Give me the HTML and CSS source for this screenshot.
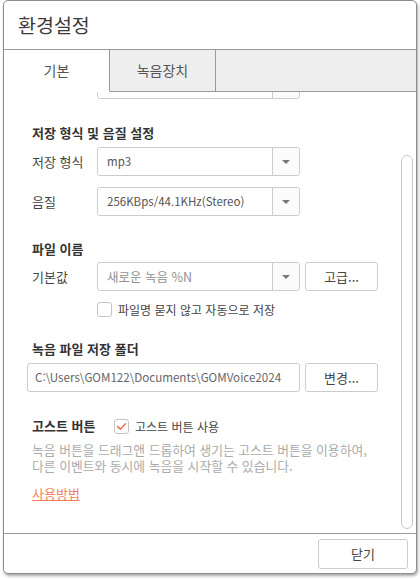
FILE: index.html
```html
<!DOCTYPE html>
<html lang="ko">
<head>
<meta charset="utf-8">
<title>환경설정</title>
<link rel="stylesheet" href="styles.css">
</head>
<body>
<div class="window">
  <div class="title">환경설정</div>
  <div class="tabs">
    <div class="tab active">기본</div>
    <div class="tab">녹음장치</div>
    <div class="tab-fill"></div>
  </div>
  <div class="body">
    <div class="content">
      <div class="row first">
        <div class="select partial"><span class="select-text"></span><span class="select-arrow"></span></div>
      </div>

      <div class="section-title s1">저장 형식 및 음질 설정</div>
      <div class="row r1">
        <span class="label">저장 형식</span>
        <div class="select"><span class="select-text">mp3</span><span class="select-arrow"><i class="tri"></i></span></div>
      </div>
      <div class="row r2">
        <span class="label">음질</span>
        <div class="select"><span class="select-text">256KBps/44.1KHz(Stereo)</span><span class="select-arrow"><i class="tri"></i></span></div>
      </div>

      <div class="section-title s2">파일 이름</div>
      <div class="row r3">
        <span class="label">기본값</span>
        <div class="select"><span class="select-text light">새로운 녹음 %N</span><span class="select-arrow"><i class="tri"></i></span></div>
        <div class="btn">고급...</div>
      </div>
      <div class="check-row r4">
        <span class="checkbox"></span>
        <span class="check-label">파일명 묻지 않고 자동으로 저장</span>
      </div>

      <div class="section-title s3">녹음 파일 저장 폴더</div>
      <div class="row r5">
        <div class="path">C:\Users\GOM122\Documents\GOMVoice2024</div>
        <div class="btn">변경...</div>
      </div>

      <div class="ghost-row">
        <span class="section-title inline">고스트 버튼</span>
        <span class="checkbox checked"><svg width="11" height="9" viewBox="0 0 11 9"><path d="M1.5 4.5 L4.3 7.2 L9.5 1.8" fill="none" stroke="#f0714c" stroke-width="1.6" stroke-linecap="round" stroke-linejoin="round"/></svg></span>
        <span class="check-label">고스트 버튼 사용</span>
      </div>
      <p class="desc">녹음 버튼을 드래그앤 드롭하여 생기는 고스트 버튼을 이용하여,<br>다른 이벤트와 동시에 녹음을 시작할 수 있습니다.</p>
      <a class="link">사용방법</a>
    </div>
    <div class="scroll">
      <div class="thumb"></div>
    </div>
  </div>
  <div class="footer">
    <div class="btn close">닫기</div>
  </div>
</div>
</body>
</html>
```
FILE: styles.css
```css
* { box-sizing: border-box; }
html, body { margin: 0; padding: 0; background: #ffffff; }
body {
  font-family: "Noto Sans CJK KR", "Noto Sans", sans-serif;
  color: #444;
  width: 420px;
  height: 580px;
  overflow: hidden;
}
.window {
  margin-left: 3px;
  width: 414px;
  height: 574px;
  border: 1px solid #8c8c8c;
  border-radius: 5px;
  background: #fff;
  box-shadow: 1px 2px 3px rgba(0,0,0,0.35);
  display: flex;
  flex-direction: column;
  overflow: hidden;
}
.title {
  height: 48px;
  padding-left: 14px;
  font-size: 19.5px;
  line-height: 48px;
  color: #3a3a3a;
}
.tabs {
  display: flex;
  height: 43px;
  border-top: 1px solid #9a9a9a;
}
.tab {
  width: 106px;
  height: 42px;
  text-align: center;
  font-size: 14px;
  line-height: 41px;
  color: #555;
  background: #eeeeee;
  border-right: 1px solid #9a9a9a;
  border-bottom: 1px solid #9a9a9a;
}
.tab.active {
  width: 106px;
  background: #fff;
  border-bottom-color: #fff;
}
.tab-fill {
  flex: 1;
  height: 42px;
  background: #eeeeee;
  border-bottom: 1px solid #9a9a9a;
}
.body {
  flex: 1;
  display: flex;
  overflow: hidden;
  border-bottom: 1px solid #9a9a9a;
}
.content {
  flex: 1;
  padding-left: 28px;
  overflow: hidden;
}
.scroll {
  width: 12px;
  margin-right: 3px;
  padding-top: 63px;
  padding-bottom: 4px;
  display: flex;
}
.thumb {
  flex: 1;
  border: 1px solid #c8c8c8;
  border-radius: 6px;
  background: #fff;
}
.row {
  display: flex;
  align-items: center;
  height: 29px;
}
.row.first { margin-top: -22px; padding-left: 65px; }
.label {
  width: 65px;
  font-size: 13px;
  color: #444;
}
.select {
  width: 203px;
  height: 29px;
  border: 1px solid #cccccc;
  border-radius: 3px;
  display: flex;
  background: #fff;
}
.select-text {
  flex: 1;
  padding-left: 9px;
  font-size: 11.5px;
  line-height: 27px;
  color: #555;
  white-space: nowrap;
}
.select-text.light { color: #8f8f8f; font-size: 12.5px; }
.select-arrow {
  width: 27px;
  border-left: 1px solid #cccccc;
  background: #fbfbfb;
  display: flex;
  align-items: center;
  justify-content: center;
  border-radius: 0 3px 3px 0;
}
.tri {
  width: 0;
  height: 0;
  border-left: 4px solid transparent;
  border-right: 4px solid transparent;
  border-top: 4px solid #777;
}
.btn {
  margin-left: 5px;
  width: 73px;
  height: 29px;
  border: 1px solid #cccccc;
  border-radius: 3px;
  font-size: 13px;
  line-height: 27px;
  text-align: center;
  color: #444;
  background: #fff;
}
.section-title {
  font-size: 13px;
  font-weight: bold;
  line-height: 18px;
  color: #333;
}
.s1 { margin-top: 25px; }
.r1 { margin-top: 5px; }
.r2 { margin-top: 11px; }
.s2 { margin-top: 24px; }
.r3 { margin-top: 4px; }
.check-row {
  display: flex;
  align-items: center;
  margin-top: 11px;
  margin-left: 65px;
  height: 15px;
}
.checkbox {
  width: 15px;
  height: 15px;
  border: 1px solid #c4c4c4;
  border-radius: 3px;
  background: #fff;
  display: flex;
  align-items: center;
  justify-content: center;
  flex: none;
}
.check-label {
  margin-left: 6px;
  font-size: 12px;
  color: #444;
  line-height: 15px;
}
.s3 { margin-top: 23px; }
.r5 { margin-top: 5px; margin-left: -5px; }
.path {
  width: 273px;
  height: 29px;
  border: 1px solid #cccccc;
  border-radius: 3px;
  padding-left: 7px;
  font-size: 11.6px;
  line-height: 27px;
  color: #666;
  white-space: nowrap;
  overflow: hidden;
}
.ghost-row {
  display: flex;
  align-items: center;
  margin-top: 25px;
  height: 18px;
}
.section-title.inline { width: 82px; }
.ghost-row .check-label { margin-left: 6px; }
.desc {
  margin: 7px 0 0 0;
  font-size: 12.8px;
  line-height: 16px;
  color: #aaaaaa;
  white-space: nowrap;
}
.link {
  display: inline-block;
  margin-top: 12px;
  font-size: 13px;
  line-height: 16px;
  color: #f3805c;
  text-decoration: underline;
}
.footer {
  height: 39px;
  display: flex;
  justify-content: flex-end;
  padding-top: 5px;
  padding-right: 8px;
}
.btn.close {
  width: 90px;
  height: 30px;
  line-height: 28px;
  font-size: 13px;
  color: #444;
}
```
